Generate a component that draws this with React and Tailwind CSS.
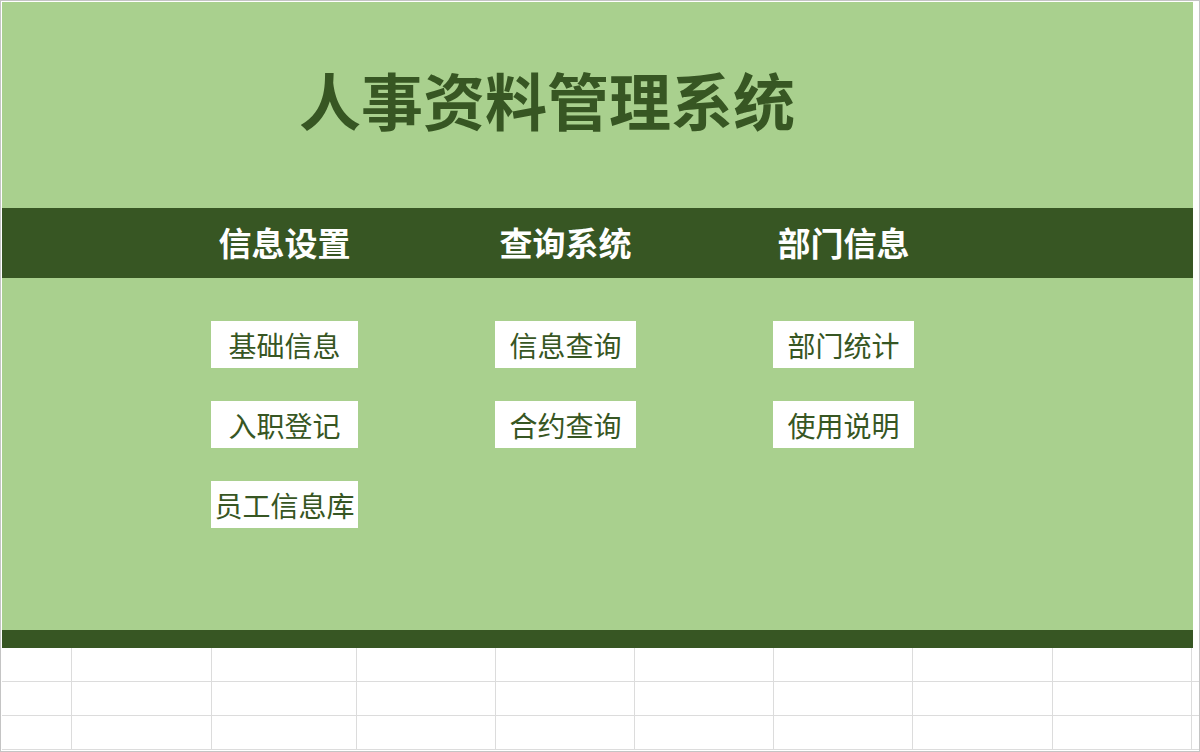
const cols = [70, 140, 145, 139, 139, 139, 139, 140, 139];
const gridCols = "grid grid-cols-[70px_140px_145px_139px_139px_139px_139px_140px_139px]";

const menus = [
  { title: "信息设置", col: "col-start-3", items: ["基础信息", "入职登记", "员工信息库"] },
  { title: "查询系统", col: "col-start-5", items: ["信息查询", "合约查询"] },
  { title: "部门信息", col: "col-start-7", items: ["部门统计", "使用说明"] },
];

const font = { fontFamily: '"Noto Sans CJK SC", "Noto Sans", sans-serif' };

const SheetRow = ({ height }) => (
  <div className={`${gridCols} ${height} border-b border-[#dcdcdc]`}>
    {cols.map((w, i) => (
      <div key={i} className="border-r border-[#dcdcdc]" />
    ))}
  </div>
);

const App = () => {
  return (
    <div
      className="w-[1200px] h-[752px] bg-white border border-[#c4c4c4] pl-px pt-px overflow-hidden"
      style={font}
    >
      <div className="w-[1191px] h-[628px] bg-[#a9d08e] flex flex-col">
        <div className="h-[206px] flex items-center pl-[297px] pb-[12px]">
          <h1 className="text-[62px] leading-none font-bold text-[#375623]">
            人事资料管理系统
          </h1>
        </div>

        <div className={`${gridCols} h-[70px] bg-[#375623] items-center`}>
          {menus.map((m) => (
            <div
              key={m.title}
              className={`${m.col} text-center text-white text-[33px] font-bold leading-none pb-[2px] whitespace-nowrap`}
            >
              {m.title}
            </div>
          ))}
        </div>

        <div className={`${gridCols} pt-[43px]`}>
          {menus.map((m) => (
            <div key={m.title} className={`${m.col} flex flex-col gap-[33px] -ml-px mr-[-1px]`}>
              {m.items.map((item) => (
                <button
                  key={item}
                  className="h-[47px] bg-white flex items-center justify-center text-[28px] text-[#375623] leading-none whitespace-nowrap"
                >
                  {item}
                </button>
              ))}
            </div>
          ))}
        </div>
      </div>

      <div className="w-[1191px] h-[18px] bg-[#375623]" />

      <SheetRow height="h-[34px]" />
      <SheetRow height="h-[34px]" />
      <SheetRow height="h-[34px]" />
    </div>
  );
};

export default App;
